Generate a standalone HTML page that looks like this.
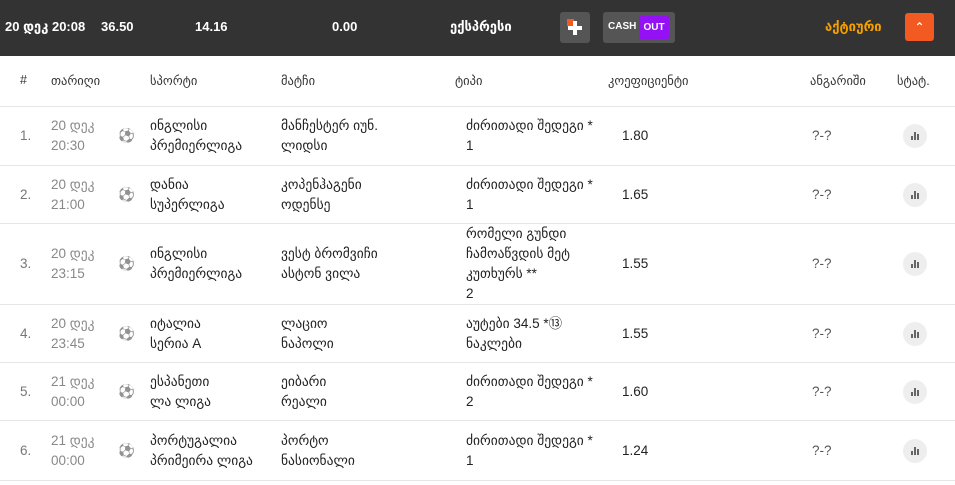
<!DOCTYPE html>
<html><head><meta charset="utf-8"><style>
*{margin:0;padding:0;box-sizing:border-box}
body{width:955px;height:485px;overflow:hidden;background:#fff;font-family:"Liberation Sans","DejaVu Sans",sans-serif;font-size:14px;color:#222}
.top{position:absolute;left:0;top:0;width:955px;height:56px;background:#333;color:#fff;font-weight:bold;font-size:13px}
.top span{position:absolute;top:19px}
.hd{position:absolute;top:56px;left:0;width:955px;height:51px;border-bottom:1px solid #e6e6e6;font-size:12.5px;color:#333}
.hd span{position:absolute;top:17px}
.row{position:absolute;left:0;width:955px;border-bottom:1px solid #e6e6e6}
.c{position:absolute;top:0;height:100%;display:flex;align-items:center;line-height:20px;font-size:13.5px}
.n{left:20px;color:#777}
.d{left:51px;color:#888}
.ball{left:118px;opacity:.6}
.s{left:150px}
.m{left:281px}
.t{left:466px}
.k{left:622px}
.sc{left:812px;color:#555}
.st{left:903px}
.sb{width:24px;height:24px;border-radius:50%;background:#eee;display:flex;align-items:flex-end;justify-content:center;padding-bottom:8px;gap:1px}
.sb i{display:block;width:2px;background:#666}
</style></head><body>
<div class="top">
<span style="left:5px">20 დეკ 20:08</span>
<span style="left:101px">36.50</span>
<span style="left:195px">14.16</span>
<span style="left:332px">0.00</span>
<span style="left:450px">ექსპრესი</span>
<div style="position:absolute;left:560px;top:12px;width:30px;height:31px;background:#555;border-radius:3px">
<div style="position:absolute;left:7px;top:7px;width:7px;height:7px;background:#f25a22"></div>
<div style="position:absolute;left:13px;top:9px;width:4px;height:14px;background:#fff"></div>
<div style="position:absolute;left:8px;top:14px;width:14px;height:4px;background:#fff"></div>
</div>
<div style="position:absolute;left:603px;top:12px;width:72px;height:31px;background:#555;border-radius:3px">
<span style="left:5px;top:9px;font-size:10px">CASH</span>
<div style="position:absolute;left:36px;top:4px;width:30px;height:23px;background:#9410f5;border-radius:2px;font-size:10px;text-align:center;line-height:23px">OUT</div>
</div>
<span style="left:825px;color:#f5a000">აქტიური</span>
<div style="position:absolute;left:905px;top:13px;width:29px;height:28px;background:#f25a22;border-radius:3px;text-align:center;line-height:28px;font-size:12px">&#8963;</div>
</div>
<div class="hd">
<span style="left:20px">#</span><span style="left:51px">თარიღი</span><span style="left:150px">სპორტი</span><span style="left:281px">მატჩი</span><span style="left:455px">ტიპი</span><span style="left:608px">კოეფიციენტი</span><span style="left:810px">ანგარიში</span><span style="left:897px">სტატ.</span>
</div>

<div class="row" style="top:107px;height:59px">
<div class="c n">1.</div><div class="c d">20 დეკ<br>20:30</div><div class="c ball">⚽</div><div class="c s">ინგლისი<br>პრემიერლიგა</div><div class="c m">მანჩესტერ იუნ.<br>ლიდსი</div><div class="c t">ძირითადი შედეგი *<br>1</div><div class="c k">1.80</div><div class="c sc">?-?</div><div class="c st"><div class="sb"><i style="height:4px"></i><i style="height:8px"></i><i style="height:6px"></i></div></div>
</div>
<div class="row" style="top:166px;height:58px">
<div class="c n">2.</div><div class="c d">20 დეკ<br>21:00</div><div class="c ball">⚽</div><div class="c s">დანია<br>სუპერლიგა</div><div class="c m">კოპენჰაგენი<br>ოდენსე</div><div class="c t">ძირითადი შედეგი *<br>1</div><div class="c k">1.65</div><div class="c sc">?-?</div><div class="c st"><div class="sb"><i style="height:4px"></i><i style="height:8px"></i><i style="height:6px"></i></div></div>
</div>
<div class="row" style="top:224px;height:81px">
<div class="c n">3.</div><div class="c d">20 დეკ<br>23:15</div><div class="c ball">⚽</div><div class="c s">ინგლისი<br>პრემიერლიგა</div><div class="c m">ვესტ ბრომვიჩი<br>ასტონ ვილა</div><div class="c t">რომელი გუნდი<br>ჩამოაწვდის მეტ<br>კუთხურს **<br>2</div><div class="c k">1.55</div><div class="c sc">?-?</div><div class="c st"><div class="sb"><i style="height:4px"></i><i style="height:8px"></i><i style="height:6px"></i></div></div>
</div>
<div class="row" style="top:305px;height:58px">
<div class="c n">4.</div><div class="c d">20 დეკ<br>23:45</div><div class="c ball">⚽</div><div class="c s">იტალია<br>სერია A</div><div class="c m">ლაციო<br>ნაპოლი</div><div class="c t">აუტები 34.5 *⑬<br>ნაკლები</div><div class="c k">1.55</div><div class="c sc">?-?</div><div class="c st"><div class="sb"><i style="height:4px"></i><i style="height:8px"></i><i style="height:6px"></i></div></div>
</div>
<div class="row" style="top:363px;height:58px">
<div class="c n">5.</div><div class="c d">21 დეკ<br>00:00</div><div class="c ball">⚽</div><div class="c s">ესპანეთი<br>ლა ლიგა</div><div class="c m">ეიბარი<br>რეალი</div><div class="c t">ძირითადი შედეგი *<br>2</div><div class="c k">1.60</div><div class="c sc">?-?</div><div class="c st"><div class="sb"><i style="height:4px"></i><i style="height:8px"></i><i style="height:6px"></i></div></div>
</div>
<div class="row" style="top:421px;height:60px">
<div class="c n">6.</div><div class="c d">21 დეკ<br>00:00</div><div class="c ball">⚽</div><div class="c s">პორტუგალია<br>პრიმეირა ლიგა</div><div class="c m">პორტო<br>ნასიონალი</div><div class="c t">ძირითადი შედეგი *<br>1</div><div class="c k">1.24</div><div class="c sc">?-?</div><div class="c st"><div class="sb"><i style="height:4px"></i><i style="height:8px"></i><i style="height:6px"></i></div></div>
</div>
</body></html>
